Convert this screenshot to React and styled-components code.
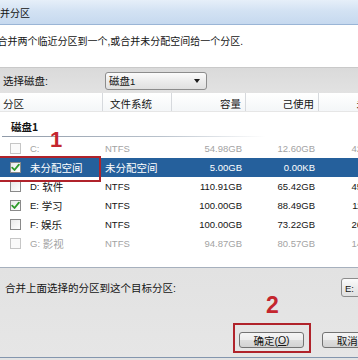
import React from 'react';
import styled, { createGlobalStyle } from 'styled-components';

const Global = createGlobalStyle`
  html, body { margin: 0; padding: 0; background: #e3e3e3; }
  body {
    width: 358px; height: 360px; overflow: hidden;
    font-family: "Liberation Sans", "Noto Sans CJK SC", sans-serif;
    font-size: 10.5px; color: #141414;
  }
  #root { width: 358px; height: 360px; overflow: hidden; position: relative; }
`;

const COLS = '105px 69px 74px 73px 74px';

const Dialog = styled.div`
  margin-left: -12px;
  width: 420px;
  height: 360px;
  display: flex;
  flex-direction: column;
  background: #e3e3e3;
`;

const TitleBar = styled.div`
  height: 25px;
  box-sizing: border-box;
  border-bottom: 1px solid #9ab5d6;
  background: linear-gradient(#e6eff9, #d3e2f3 45%, #c6d9ef);
  display: flex;
  align-items: center;
  padding: 1px 0 0 2px;
  font-family: "Noto Sans CJK SC", sans-serif;
  font-size: 10px;
  color: #111;
`;

const Description = styled.div`
  height: 42px;
  box-sizing: border-box;
  background: #fff;
  padding: 10px 0 0 9.5px;
  line-height: 14px;
  font-size: 10px;
  white-space: nowrap;
`;

const DiskBar = styled.div`
  height: 26px;
  box-sizing: border-box;
  border-top: 1px solid #c9c9c9;
  background: linear-gradient(#dadada, #e2e2e2);
  display: flex;
  align-items: center;
  padding-left: 15px;
`;

const BarLabel = styled.span`
  width: ${p => p.$w}px;
  flex: none;
  white-space: nowrap;
`;

const Combo = styled.div`
  width: ${p => p.$w}px;
  height: ${p => p.$h}px;
  box-sizing: border-box;
  border: 1px solid #8c8c8c;
  border-radius: 3px;
  background: linear-gradient(#fbfbfb, #ececec 50%, #e0e0e0);
  display: flex;
  align-items: center;
  padding: 0 6px 0 3px;
  flex: none;
`;

const ComboText = styled.span`
  flex: 1;
  white-space: nowrap;
`;

const Arrow = styled.span`
  width: 0; height: 0;
  border-left: 3.5px solid transparent;
  border-right: 3.5px solid transparent;
  border-top: 4px solid #1a1a1a;
`;

const Table = styled.div`
  margin-left: 10px;
  height: 175px;
  box-sizing: border-box;
  background: #fff;
  border-bottom: 1px solid #a6b0bd;
  display: flex;
  flex-direction: column;
`;

const Header = styled.div`
  display: grid;
  grid-template-columns: ${COLS};
  height: 19px;
  box-sizing: border-box;
  border-bottom: 1px solid #e6e6e6;
  background: linear-gradient(#ffffff, #f4f6f8);
`;

const HeadCell = styled.div`
  display: flex;
  align-items: center;
  justify-content: ${p => (p.$right ? 'flex-end' : 'flex-start')};
  padding: ${p => (p.$right ? '2px 4px 0 0' : `2px 0 0 ${p.$pl}px`)};
  border-right: 1px solid #d6d9dd;
  white-space: nowrap;
  overflow: hidden;
`;

const GroupRow = styled.div`
  padding: 8px 0 2px 13px;
  line-height: 14px;
  font-weight: bold;
  font-family: "Noto Sans CJK SC", sans-serif;
  font-size: 10.5px;
`;

const GroupLine = styled.div`
  height: 1px;
  width: 264px;
  margin: 0 0 2px 4px;
  background: linear-gradient(to right, #8f9aa8, #b9c2cc 60%, rgba(220, 226, 232, 0));
`;

const Row = styled.div`
  display: grid;
  grid-template-columns: ${COLS};
  height: 19px;
  background: ${p => (p.$selected ? '#25609c' : 'transparent')};
  color: ${p => (p.$selected ? '#ffffff' : p.$disabled ? '#a3a3a3' : '#141414')};
`;

const Cell = styled.div`
  display: flex;
  align-items: center;
  justify-content: ${p => (p.$right ? 'flex-end' : 'flex-start')};
  padding: ${p => (p.$right ? '0 4px 0 0' : `0 0 0 ${p.$pl || 0}px`)};
  white-space: nowrap;
  overflow: hidden;
`;

const Lat = styled.span`
  font-family: "Liberation Sans", sans-serif;
  font-size: 9.5px;
`;

const Box = styled.span`
  width: 11px;
  height: 11px;
  box-sizing: border-box;
  border: 1px solid ${p => (p.$disabled ? '#c6c6c6' : '#8a8a8a')};
  background: ${p => (p.$disabled ? '#fafafa' : 'linear-gradient(135deg, #e9e9e9, #ffffff)')};
  margin-right: 9px;
  flex: none;
  display: flex;
  align-items: center;
  justify-content: center;
`;

const Footer = styled.div`
  height: 90px;
  box-sizing: border-box;
  border-bottom: 1px solid #8396ae;
  background: linear-gradient(#e2e2e2, #e6e6e6);
  padding: 10px 0 0 17px;
  display: flex;
  flex-direction: column;
`;

const TargetRow = styled.div`
  display: flex;
  align-items: center;
  height: 19px;
`;

const Buttons = styled.div`
  display: flex;
  gap: 18px;
  margin: 35px 0 0 234px;
`;

const Btn = styled.div`
  width: 65px;
  height: 16px;
  box-sizing: border-box;
  border: 1px solid #737373;
  border-radius: 3px;
  background: linear-gradient(#f5f5f5, #ececec 50%, #dedede 52%, #d2d2d2);
  display: flex;
  align-items: center;
  justify-content: center;
  white-space: nowrap;
  font-size: 10.5px;
`;

const Mark = styled.div`
  position: absolute;
  left: ${p => p.$x}px;
  top: ${p => p.$y}px;
  width: ${p => p.$w}px;
  height: ${p => p.$h}px;
  box-sizing: border-box;
  border: 2px solid #b0232b;
  pointer-events: none;
`;

const Num = styled.div`
  position: absolute;
  left: ${p => p.$x}px;
  top: ${p => p.$y}px;
  font-family: "Liberation Sans", sans-serif;
  font-weight: bold;
  font-size: ${p => p.$s}px;
  line-height: ${p => p.$s}px;
  color: #c4262e;
`;

const Check = () => (
  <svg width="9" height="9" viewBox="0 0 9 9">
    <path d="M1.2 4.6 L3.5 7 L7.9 1.6" fill="none" stroke="#2e9a2a" strokeWidth="1.8" strokeLinecap="round" strokeLinejoin="round" />
  </svg>
);

const rows = [
  { d: 'C:', n: '', fs: 'NTFS', cap: '54.98GB', used: '12.60GB', free: '42.38GB', disabled: true },
  { d: '', n: '未分配空间', fs: '未分配空间', cap: '5.00GB', used: '0.00KB', free: '', selected: true, checked: true },
  { d: 'D:', n: '软件', fs: 'NTFS', cap: '110.91GB', used: '65.42GB', free: '45.49GB' },
  { d: 'E:', n: '学习', fs: 'NTFS', cap: '100.00GB', used: '88.49GB', free: '11.51GB', checked: true },
  { d: 'F:', n: '娱乐', fs: 'NTFS', cap: '100.00GB', used: '73.22GB', free: '26.78GB' },
  { d: 'G:', n: '影视', fs: 'NTFS', cap: '94.87GB', used: '80.57GB', free: '14.30GB', disabled: true },
];

export default function App() {
  return (
    <>
      <Global />
      <Dialog>
        <TitleBar>合并分区</TitleBar>
        <Description>合并两个临近分区到一个,或合并未分配空间给一个分区.</Description>
        <DiskBar>
          <BarLabel $w={102}>选择磁盘:</BarLabel>
          <Combo $w={102} $h={18}>
            <ComboText>磁盘<Lat>1</Lat></ComboText>
            <Arrow />
          </Combo>
        </DiskBar>
        <Table>
          <Header>
            <HeadCell $pl={5}>分区</HeadCell>
            <HeadCell $pl={7}>文件系统</HeadCell>
            <HeadCell $right>容量</HeadCell>
            <HeadCell $right>己使用</HeadCell>
            <HeadCell $right>未使用</HeadCell>
          </Header>
          <GroupRow>磁盘1</GroupRow>
          <GroupLine />
          {rows.map((r, i) => (
            <Row key={i} $selected={r.selected} $disabled={r.disabled}>
              <Cell $pl={12}>
                <Box $disabled={r.disabled}>{r.checked && <Check />}</Box>
                {r.d && <Lat>{r.d}&nbsp;</Lat>}
                {r.n}
              </Cell>
              <Cell $pl={2}>{r.fs === 'NTFS' ? <Lat>{r.fs}</Lat> : r.fs}</Cell>
              <Cell $right><Lat>{r.cap}</Lat></Cell>
              <Cell $right><Lat>{r.used}</Lat></Cell>
              <Cell $right><Lat>{r.free}</Lat></Cell>
            </Row>
          ))}
        </Table>
        <Footer>
          <TargetRow>
            <BarLabel $w={336}>合并上面选择的分区到这个目标分区:</BarLabel>
            <Combo $w={70} $h={19}>
              <ComboText><Lat>E:</Lat></ComboText>
            </Combo>
          </TargetRow>
          <Buttons>
            <Btn>确定(<u>O</u>)</Btn>
            <Btn>取消(<u>C</u>)</Btn>
          </Buttons>
        </Footer>
      </Dialog>
      <Mark $x={-2} $y={156} $w={103} $h={26} />
      <Num $x={50} $y={129} $s={22}>1</Num>
      <Mark $x={233} $y={323} $w={78} $h={30} />
      <Num $x={266} $y={294} $s={23}>2</Num>
    </>
  );
}
